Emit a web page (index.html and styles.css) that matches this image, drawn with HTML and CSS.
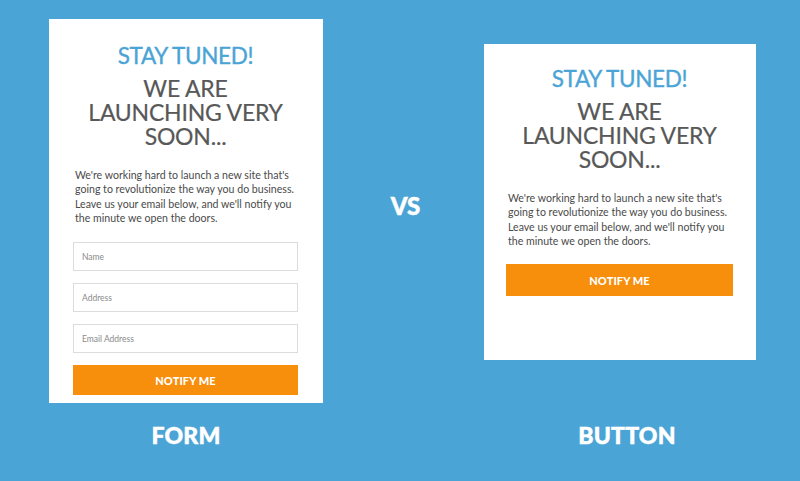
FILE: index.html
```html
<!DOCTYPE html>
<html lang="en">
<head>
<meta charset="utf-8">
<title>Form vs Button</title>
<link rel="stylesheet" href="styles.css">
</head>
<body>
<main class="stage">
  <section class="card card-form">
    <h2 class="kicker">STAY TUNED!</h2>
    <h1 class="title">WE ARE<br>LAUNCHING VERY<br>SOON...</h1>
    <p class="copy">We're working hard to launch a new site that's going to revolutionize the way you do business. Leave us your email below, and we'll notify you the minute we open the doors.</p>
    <div class="fields">
      <div class="field">Name</div>
      <div class="field">Address</div>
      <div class="field">Email Address</div>
      <div class="btn">NOTIFY ME</div>
    </div>
  </section>
  <div class="vs">VS</div>
  <section class="card card-button">
    <h2 class="kicker">STAY TUNED!</h2>
    <h1 class="title">WE ARE<br>LAUNCHING VERY<br>SOON...</h1>
    <p class="copy">We're working hard to launch a new site that's going to revolutionize the way you do business. Leave us your email below, and we'll notify you the minute we open the doors.</p>
    <div class="btn btn-tall">NOTIFY ME</div>
  </section>
  <div class="label">FORM</div>
  <div></div>
  <div class="label label-right">BUTTON</div>
</main>
</body>
</html>
```
FILE: styles.css
```css
* { box-sizing: border-box; }
html, body {
  margin: 0;
  padding: 0;
  background: #4ba4d6;
  width: 800px;
  height: 481px;
  overflow: hidden;
  font-family: Lato, "Open Sans", sans-serif;
}
.stage {
  display: grid;
  grid-template-columns: 274px 161px 272px;
  grid-template-rows: 384px auto;
  row-gap: 19px;
  padding: 19px 0 0 49px;
}
.card {
  background: #fff;
  text-align: center;
  align-self: start;
}
.card-form {
  height: 384px;
  padding: 25px 25px 0 24px;
}
.card-button {
  height: 316px;
  margin-top: 25px;
  padding: 23px 23px 0 22px;
}
.kicker {
  margin: 0;
  font-size: 22.5px;
  line-height: 24px;
  font-weight: 400;
  color: #4ba4d6;
  letter-spacing: -0.3px;
  -webkit-text-stroke: 0.35px #4ba4d6;
}
.title {
  margin: 8px 0 0;
  font-size: 23px;
  line-height: 24px;
  font-weight: 400;
  color: #585858;
  letter-spacing: -0.2px;
  -webkit-text-stroke: 0.2px #585858;
}
.copy {
  margin: 20px 0 0;
  padding: 0 0 0 2px;
  text-align: left;
  font-size: 10.6px;
  line-height: 14.3px;
  color: #4a4a4a;
}
.fields {
  margin-top: 17px;
  display: flex;
  flex-direction: column;
  gap: 12px;
}
.field {
  height: 29px;
  border: 1px solid #dcdcdc;
  padding-left: 8px;
  display: flex;
  align-items: center;
  text-align: left;
  font-size: 8.5px;
  color: #8a8a8a;
}
.btn {
  height: 30px;
  background: #f78e0c;
  color: #fff;
  font-weight: 900;
  font-size: 11px;
  display: flex;
  align-items: center;
  justify-content: center;
  letter-spacing: 0.1px;
}
.btn-tall {
  height: 32px;
  margin-top: 16px;
}
.vs {
  align-self: start;
  margin-top: 175px;
  text-align: center;
  color: #fff;
  font-weight: 900;
  font-size: 24px;
  line-height: 24px;
  padding-left: 4px;
  -webkit-text-stroke: 0.5px #fff;
}
.label {
  text-align: center;
  color: #fff;
  font-weight: 900;
  font-size: 23px;
  line-height: 26px;
  letter-spacing: 0.2px;
  -webkit-text-stroke: 0.5px #fff;
}
.label-right {
  padding-left: 14px;
}
```
